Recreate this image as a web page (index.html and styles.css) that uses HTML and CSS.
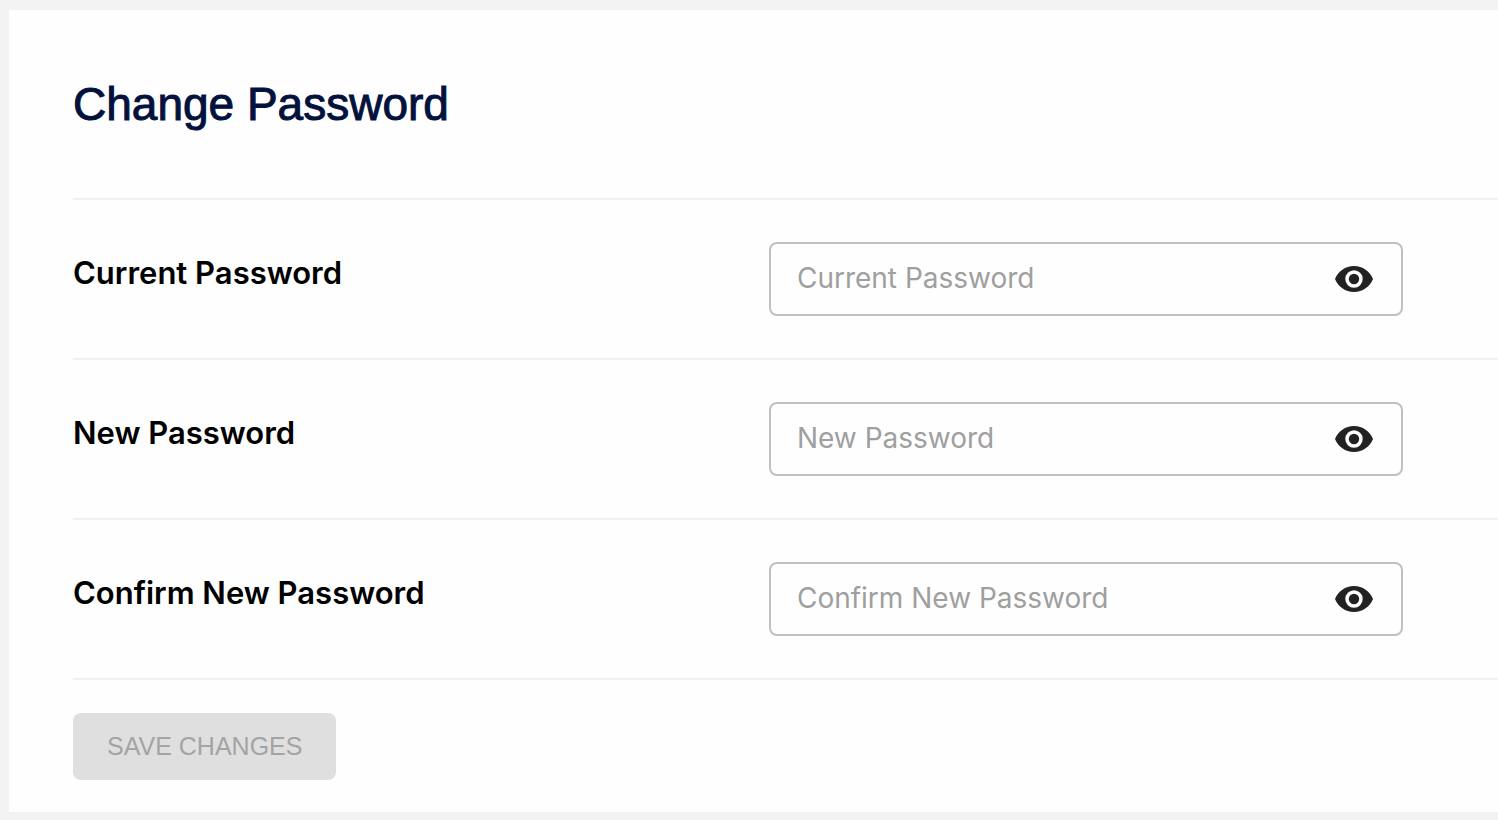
FILE: index.html
```html
<!DOCTYPE html>
<html lang="en">
<head>
    <meta charset="UTF-8">
    <meta name="viewport" content="width=device-width, initial-scale=1.0">
    <title>Change Password</title>
    <link rel="stylesheet" href="styles.css">
</head>
<body>
    <main class="card">
        <h1>Change Password</h1>
        <form id="changePasswordForm">
            <div class="row">
                <label for="currentPassword">Current Password</label>
                <div class="field">
                    <input type="password" id="currentPassword" placeholder="Current Password">
                    <button type="button" class="toggle" aria-label="Show current password">
                        <svg viewBox="0 0 38 26" aria-hidden="true"><path fill-rule="evenodd" d="M19 0C10.4 0 3 5.4 0 13c3 7.600 10.400 13 19 13s16-5.400 19-13C35 5.400 27.600 0 19 0zm0 21.700a8.700 8.700 0 1 1 0-17.400 8.700 8.700 0 0 1 0 17.400zm0-3.500a5.200 5.200 0 1 0 0-10.400 5.200 5.200 0 0 0 0 10.400z"/></svg>
                    </button>
                </div>
            </div>
            <div class="row">
                <label for="newPassword">New Password</label>
                <div class="field">
                    <input type="password" id="newPassword" placeholder="New Password">
                    <button type="button" class="toggle" aria-label="Show new password">
                        <svg viewBox="0 0 38 26" aria-hidden="true"><path fill-rule="evenodd" d="M19 0C10.4 0 3 5.4 0 13c3 7.600 10.400 13 19 13s16-5.400 19-13C35 5.400 27.600 0 19 0zm0 21.700a8.700 8.700 0 1 1 0-17.400 8.700 8.700 0 0 1 0 17.400zm0-3.500a5.200 5.200 0 1 0 0-10.400 5.200 5.200 0 0 0 0 10.400z"/></svg>
                    </button>
                </div>
            </div>
            <div class="row">
                <label for="confirmPassword">Confirm New Password</label>
                <div class="field">
                    <input type="password" id="confirmPassword" placeholder="Confirm New Password">
                    <button type="button" class="toggle" aria-label="Show confirmed password">
                        <svg viewBox="0 0 38 26" aria-hidden="true"><path fill-rule="evenodd" d="M19 0C10.4 0 3 5.4 0 13c3 7.600 10.400 13 19 13s16-5.400 19-13C35 5.400 27.600 0 19 0zm0 21.700a8.700 8.700 0 1 1 0-17.400 8.700 8.700 0 0 1 0 17.400zm0-3.500a5.200 5.200 0 1 0 0-10.400 5.200 5.200 0 0 0 0 10.400z"/></svg>
                    </button>
                </div>
            </div>
            <div class="actions">
                <button type="submit" class="save" disabled>SAVE CHANGES</button>
            </div>
        </form>
    </main>
</body>
</html>
```
FILE: styles.css
```css
* {
    box-sizing: border-box;
}
body {
    margin: 0;
    padding: 10px 0 8px 9px;
    background-color: #f3f3f3;
    font-family: Inter, Arial, sans-serif;
}
.card {
    padding: 64px 0 32px 64px;
    background-color: #fefefe;
}
h1 {
    margin: 0;
    padding-bottom: 64px;
    color: #03123d;
    font-family: "Liberation Sans", Arial, sans-serif;
    font-size: 46px;
    font-weight: 400;
    line-height: 60px;
    -webkit-text-stroke: 1px #03123d;
}
.row {
    display: grid;
    grid-template-columns: 21fr 22fr;
    padding: 42px 0;
    border-top: 2px solid #f1f1f1;
}
label {
    padding-top: 10px;
    color: #000;
    font-size: 31px;
    font-weight: 600;
    line-height: 42px;
}
.field {
    display: flex;
    align-items: center;
    width: 87%;
    height: 74px;
    padding: 0 28px 0 26px;
    border: 2px solid #c0c0c0;
    border-radius: 8px;
}
.field input {
    flex: 1;
    min-width: 0;
    height: 70px;
    padding: 0 0 2px;
    border: none;
    outline: none;
    background: none;
    font-family: inherit;
    font-size: 28px;
}
.field input::placeholder {
    color: #9f9f9f;
}
.toggle {
    display: flex;
    padding: 0;
    border: none;
    background: none;
    cursor: pointer;
}
.toggle svg {
    width: 38px;
    height: 26px;
    fill: #222;
}
.actions {
    padding-top: 33px;
    border-top: 2px solid #f1f1f1;
}
.save {
    display: block;
    height: 67px;
    padding: 0 34px;
    border: none;
    border-radius: 8px;
    background-color: #dfdfdf;
    color: #a4a4a4;
    font-family: "Liberation Sans", Arial, sans-serif;
    font-size: 25px;
}
```
